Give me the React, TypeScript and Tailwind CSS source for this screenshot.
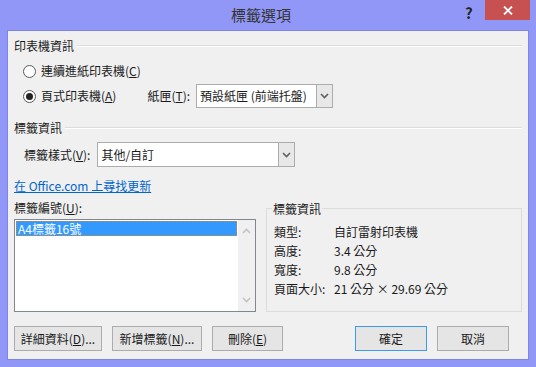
import React from 'react';

const font = { fontFamily: '"Noto Sans CJK TC", "Noto Sans", sans-serif' };

function Chevron({ className = '' }: { className?: string }) {
  return (
    <svg width="9" height="6" viewBox="0 0 9 6" className={className}>
      <path d="M1 1 L4.5 4.5 L8 1" fill="none" stroke="currentColor" strokeWidth="1.6" />
    </svg>
  );
}

function Section({ title }: { title: string }) {
  return (
    <div className="flex items-center h-[16px] gap-[3px]">
      <span>{title}</span>
      <div className="flex-1 h-[2px] border-t border-[#dcdcdc] border-b-white border-b" />
    </div>
  );
}

function Radio({ checked, children }: { checked?: boolean; children: React.ReactNode }) {
  return (
    <div className="flex items-center">
      <span className="ml-[9px] w-[13px] h-[13px] rounded-full border border-[#5a5a5a] bg-white flex items-center justify-center">
        {checked && <span className="w-[7px] h-[7px] rounded-full bg-[#222]" />}
      </span>
      <span className="ml-[5px]">{children}</span>
    </div>
  );
}

function Select({ value, className }: { value: string; className: string }) {
  return (
    <div className={`flex bg-white border border-[#acacac] ${className}`}>
      <div className="flex-1 flex items-center pl-[3px]">{value}</div>
      <div className="w-[16px] border-l border-[#acacac] bg-[#e8e8e8] flex items-center justify-center text-[#606060]">
        <Chevron />
      </div>
    </div>
  );
}

function Button({ children, primary, className }: { children: React.ReactNode; primary?: boolean; className: string }) {
  return (
    <div
      className={`h-[25px] flex items-center justify-center bg-[#e5e5e5] border ${
        primary ? 'border-[#3c9bf0]' : 'border-[#acacac]'
      } ${className}`}
    >
      {children}
    </div>
  );
}

export default function App() {
  return (
    <div className="w-[536px] h-[367px] bg-[#9197f7] flex flex-col text-[12px] text-[#1a1a1a]" style={font}>
      <div className="relative h-[30px] shrink-0">
        <div className="h-[30px] flex items-center justify-center pr-[14px] text-[15px] text-[#333]">標籤選項</div>
        <div className="absolute left-[465px] top-[2px] text-[15px] font-bold text-[#222]">?</div>
        <div className="absolute left-[485px] top-0 w-[45px] h-[20px] bg-[#c75050] flex items-center justify-center">
          <svg width="10" height="9" viewBox="0 0 10 9">
            <path d="M1 0.5 L9 8.5 M9 0.5 L1 8.5" stroke="white" strokeWidth="1.8" />
          </svg>
        </div>
      </div>
      <div className="mx-[7px] mb-[7px] flex-1 bg-[#f0f0f0] border border-[#7e85e6] px-[6px] pt-[7px] flex flex-col">
        <Section title="印表機資訊" />
        <div className="mt-[7px] h-[20px] flex items-center">
          <Radio>
            連續進紙印表機(<u>C</u>)
          </Radio>
        </div>
        <div className="mt-[3px] h-[24px] flex items-center">
          <Radio checked>
            頁式印表機(<u>A</u>)
          </Radio>
          <span className="ml-[31px]">
            紙匣(<u>T</u>):
          </span>
          <Select value="預設紙匣 (前端托盤)" className="ml-[6px] w-[137px] h-[24px]" />
        </div>
        <div className="mt-[12px]">
          <Section title="標籤資訊" />
        </div>
        <div className="mt-[6px] h-[25px] flex items-center">
          <span className="ml-[10px]">
            標籤樣式(<u>V</u>):
          </span>
          <Select value="其他/自訂" className="ml-[7px] w-[198px] h-[25px]" />
        </div>
        <div className="mt-[11px] h-[16px] flex items-center">
          <span className="text-[#0066cc] underline">在 Office.com 上尋找更新</span>
        </div>
        <div className="mt-[6px] flex gap-[10px]">
          <div className="flex flex-col">
            <div className="h-[16px] flex items-center">
              標籤編號(<u>U</u>):
            </div>
            <div className="mt-[3px] w-[242px] h-[93px] border border-[#828790] bg-white flex">
              <div className="flex-1 p-[1px]">
                <div className="h-[15px] bg-[#3399ff] text-white flex items-center pl-[2px] outline outline-1 outline-dotted outline-[#d08a2a] -outline-offset-1">
                  A4標籤16號
                </div>
              </div>
              <div className="w-[17px] bg-[#f0f0f0] flex flex-col items-center justify-between py-[8px] text-[#c2c2c2]">
                <Chevron className="rotate-180" />
                <Chevron />
              </div>
            </div>
          </div>
          <div className="mt-[8px] relative w-[256px] h-[104px] border border-[#dcdcdc] pl-[7px] pt-[13px]">
            <span className="absolute left-[5px] -top-[9px] bg-[#f0f0f0] px-[1px]">標籤資訊</span>
            {[
              ['類型:', '自訂雷射印表機'],
              ['高度:', '3.4 公分'],
              ['寬度:', '9.8 公分'],
              ['頁面大小:', '21 公分 × 29.69 公分'],
            ].map(([k, v]) => (
              <div key={k} className="h-[19px] flex items-center">
                <span className="w-[60px]">{k}</span>
                <span>{v}</span>
              </div>
            ))}
          </div>
        </div>
        <div className="mt-[14px] flex">
          <Button className="w-[88px]">
            詳細資料(<u>D</u>)...
          </Button>
          <Button className="ml-[10px] w-[90px]">
            新增標籤(<u>N</u>)...
          </Button>
          <Button className="ml-[10px] w-[71px]">
            刪除(<u>E</u>)
          </Button>
          <Button primary className="ml-[72px] w-[72px]">
            確定
          </Button>
          <Button className="ml-[10px] w-[72px]">取消</Button>
        </div>
      </div>
    </div>
  );
}
